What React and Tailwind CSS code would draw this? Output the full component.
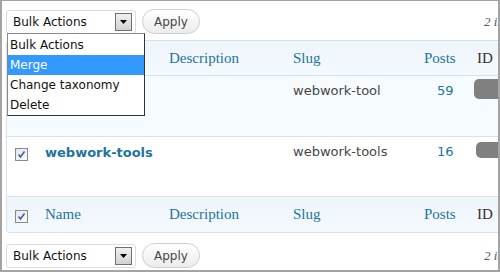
import React from 'react';

const sans = { fontFamily: '"DejaVu Sans", Verdana, sans-serif' };
const serif = { fontFamily: '"Liberation Serif", Georgia, serif' };

// kleine Checkbox im alten Windows-Stil
function Check() {
  return (
    <div className="w-[13px] h-[13px] border border-[#8a8a8a] bg-gradient-to-br from-[#e6e6e6] to-[#fbfbfb] flex items-center justify-center">
      <svg width="9" height="9" viewBox="0 0 9 9">
        <path d="M1.5 4.5 L3.5 7 L7.5 1.5" fill="none" stroke="#3b5eaa" strokeWidth="1.6" />
      </svg>
    </div>
  );
}

function BulkSelect() {
  return (
    <div className="w-[130px] h-[24px] border border-[#dcdcdc] rounded-[3px] bg-white flex items-center justify-between pl-[6px] pr-[3px]">
      <span className="text-[12px] text-[#111]" style={sans}>Bulk Actions</span>
      <div className="w-[17px] h-[18px] border border-[#707070] bg-gradient-to-b from-[#f0f0f0] to-[#d2d2d2] flex items-center justify-center">
        <svg width="7" height="4" viewBox="0 0 7 4">
          <path d="M0 0 L7 0 L3.5 4 Z" fill="#000" />
        </svg>
      </div>
    </div>
  );
}

function ApplyButton() {
  return (
    <div className="w-[58px] h-[25px] ml-[6px] rounded-full border border-[#cfcfcf] bg-gradient-to-b from-[#ffffff] to-[#ececec] flex items-center justify-center">
      <span className="text-[12px] text-[#464646]" style={sans}>Apply</span>
    </div>
  );
}

function TableNav() {
  return (
    <div className="flex items-center h-[25px] whitespace-nowrap">
      <BulkSelect />
      <ApplyButton />
      <span className="ml-[284px] text-[13px] italic text-[#555]" style={serif}>2 items</span>
    </div>
  );
}

const cols = 'grid grid-cols-[38px_124px_124px_131px_53px_1fr]';

function HeadRow({ border }) {
  return (
    <div className={`${cols} h-[35px] items-center bg-gradient-to-b from-[#eef5fb] to-[#f4f9fd] ${border ? 'border-b border-[#d4e2ec]' : ''}`}>
      <div className="pl-[8px] pt-[3px]"><Check /></div>
      <span className="text-[15px] text-[#21759b]" style={serif}>Name</span>
      <span className="text-[15px] text-[#21759b]" style={serif}>Description</span>
      <span className="text-[15px] text-[#21759b]" style={serif}>Slug</span>
      <span className="text-[15px] text-[#21759b]" style={serif}>Posts</span>
      <span className="text-[15px] text-[#333]" style={serif}>ID</span>
    </div>
  );
}

function Row({ name, slug, posts, bg, h, blob }) {
  return (
    <div className={`${cols} ${h} ${bg} border-b border-[#d4e2ec] items-start`}>
      <div className="pl-[8px] pt-[11px]"><Check /></div>
      <span className="pt-[6px] text-[13px] font-bold text-[#21759b]" style={sans}>{name}</span>
      <span />
      <span className="pt-[5px] text-[13px] text-[#464646]" style={sans}>{slug}</span>
      <span className="pt-[5px] pl-[13px] text-[13px] text-[#21759b]" style={sans}>{posts}</span>
      <div className={blob}>
        <div className="w-[40px] h-full rounded-[5px] bg-[#808080]" />
      </div>
    </div>
  );
}

export default function App() {
  return (
    <div className="relative w-[500px] h-[272px] overflow-hidden bg-white border-t border-l-2 border-r-2 border-b-2 border-[#a3a3a3]">
      <div className="w-[600px] pl-[4px] pt-[8px]">
        <TableNav />

        <div className="mt-[6px] border-t border-l border-b border-[#d4e2ec] rounded-l-[4px] overflow-hidden">
          <HeadRow border />
          {/* Name der ersten Zeile liegt unter der Auswahlliste */}
          <Row name="" slug="webwork-tool" posts="59" bg="bg-[#f6fbff]" h="h-[61px]" blob="-ml-[3px] pt-[3px] h-[23px]" />
          <Row name="webwork-tools" slug="webwork-tools" posts="16" bg="bg-white" h="h-[60px]" blob="-ml-[1px] pt-[5px] h-[21px]" />
          <HeadRow />
        </div>

        <div className="mt-[10px]">
          <TableNav />
        </div>
      </div>

      {/* aufgeklappte Auswahlliste */}
      <div className="absolute left-[5px] top-[32px] w-[138px] h-[83px] bg-white border border-[#8a8a8a] border-r-[#333] border-b-[#333] pt-px text-[12px] text-[#111]" style={sans}>
        <div className="h-[20px] flex items-center pl-[2px]">Bulk Actions</div>
        <div className="h-[20px] flex items-center pl-[2px] bg-[#3399ff] text-white">Merge</div>
        <div className="h-[20px] flex items-center pl-[2px]">Change taxonomy</div>
        <div className="h-[20px] flex items-center pl-[2px]">Delete</div>
      </div>
    </div>
  );
}
